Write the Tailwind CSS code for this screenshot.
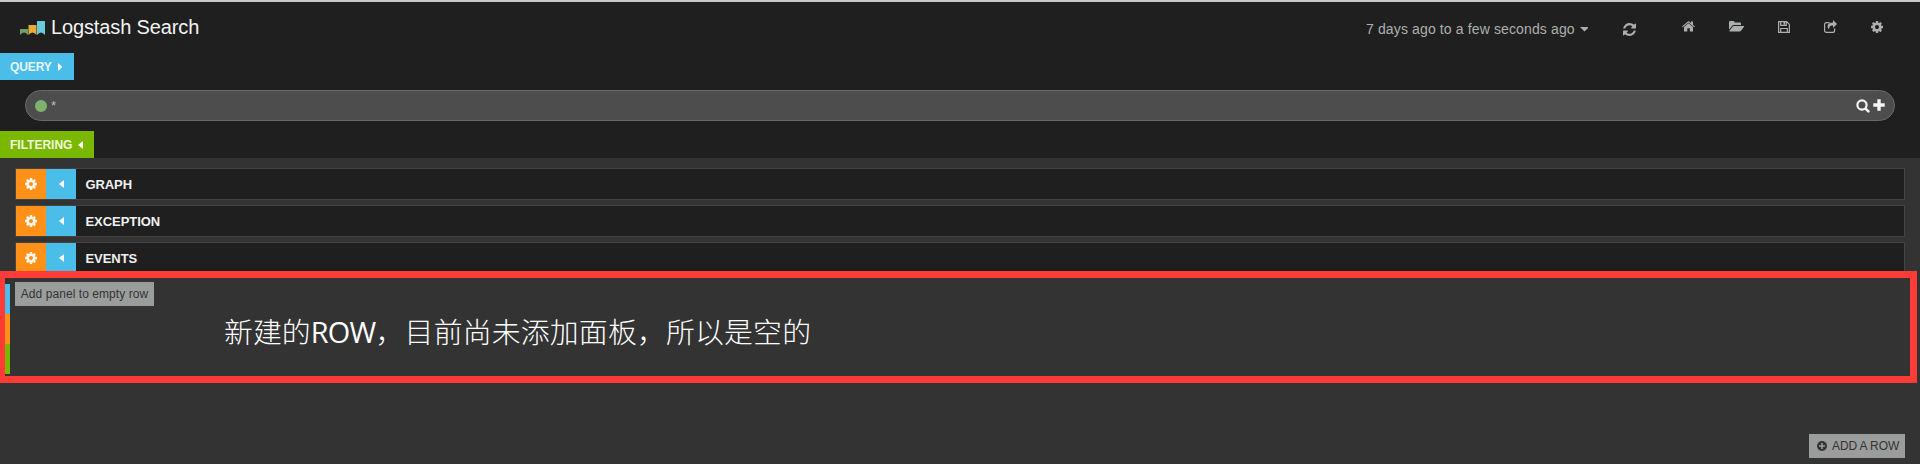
<!DOCTYPE html>
<html lang="zh">
<head>
<meta charset="utf-8">
<title>Logstash Search</title>
<script src="https://cdn.jsdelivr.net/npm/@tailwindcss/browser@4"></script>
</head>
<body class="relative h-[464px] w-[1920px] overflow-hidden bg-[#333333] font-['Liberation_Sans','Noto_Sans_CJK_SC',sans-serif]">
<svg class="hidden">
  <symbol id="cog" viewBox="0 0 1536 1536"><path d="M1024 768q0-106-75-181t-181-75-181 75-75 181 75 181 181 75 181-75 75-181zm512-109v222q0 12-8 23t-20 13l-185 28q-19 54-39 91 35 50 107 138 10 12 10 25t-9 23q-27 37-99 108t-94 71q-12 0-26-9l-138-108q-44 23-91 38-16 136-29 186-7 28-36 28H657q-14 0-24.500-8.500T621 1506l-28-184q-49-16-90-37l-141 107q-10 9-25 9-14 0-25-11-126-114-165-168-7-10-7-23 0-12 8-23 15-21 51-66.500t54-70.500q-27-50-41-99L29 913q-13-2-21-12.500T0 877V655q0-12 8-23t19-13l186-28q14-46 39-92-40-57-107-138-10-12-10-24 0-10 9-23 26-36 98.500-107.500T337 135q13 0 26 10l138 107q44-23 91-38 16-136 29-186 7-28 36-28h222q14 0 24.500 8.500T915 30l28 184q49 16 90 37l142-107q9-9 24-9 13 0 25 10 129 119 165 170 7 8 7 22 0 12-8 23-15 21-51 66.500t-54 70.500q26 50 41 98l183 28q13 2 21 12.500t8 23.500z"/></symbol>
</svg>
<div class="flex h-full flex-col">
  <header class="h-[158px] shrink-0 border-t-2 border-[#c8caca] bg-[#1f1f1f]">
    <div class="flex h-[51px] items-start">
      <div class="flex pt-[12px] pl-5">
        <svg class="mt-[6px] mr-[6px]" width="25" height="16" viewBox="0 0 25 16"><path fill="#6f9e6c" d="M0 9h8v6q-4-5-8 0z"/><path fill="#e9ac35" d="M8.500 5h8v10q-4-5-8 0z"/><path fill="#6ccbdb" d="M17 1h8v14q-4-5-8 0z"/></svg>
        <h1 class="w-[148px] text-[20px] leading-[26px] tracking-[-0.13px] whitespace-nowrap text-[#f4f4f4]">Logstash Search</h1>
      </div>
      <nav class="ml-auto flex pr-[37px] text-[#adafae]">
        <div class="mt-[18px] mr-[35px] flex w-[222px] text-sm leading-[18px] tracking-[0.13px] whitespace-nowrap">7 days ago to a few seconds ago<svg class="mt-[7px] ml-[5px]" width="9" height="5"><path fill="currentColor" d="M0 0h9L4.500 4.500z"/></svg></div>
        <svg class="mt-[21px] mr-[46px]" width="13" height="13" viewBox="0 0 1536 1536" fill="currentColor"><path d="M1511 928q0 5-1 7-64 268-268 434.500T764 1536q-146 0-282.500-55T238 1324l-129 129q-19 19-45 19t-45-19-19-45V960q0-26 19-45t45-19h448q26 0 45 19t19 45-19 45l-137 137q71 66 161 102t187 36q134 0 250-65t186-179q11-17 53-117 8-23 30-23h192q13 0 22.500 9.500t9.500 22.500zm25-800v448q0 26-19 45t-45 19h-448q-26 0-45-19t-19-45 19-45l138-138Q969 256 768 256q-134 0-250 65T332 500q-11 17-53 117-8 23-30 23H50q-13 0-22.500-9.500T18 608v-7q65-268 270-434.500T768 0q146 0 284 55.500T1297 212l130-129q19-19 45-19t45 19 19 45z"/></svg>
        <svg class="mt-[18px] mr-[34px]" width="13" height="13" viewBox="0 0 13 13" fill="currentColor"><path d="M6.500 3.200 11 7v4.500H7.800V8.200H5.300v3.300H2V7z"/><path d="M6.500 1 9 3V1.500h2V4.700L13 6.500l-.7.800L6.500 2.500.7 7.300 0 6.500z"/></svg>
        <svg class="mt-[18px] mr-[33px]" width="16" height="13" viewBox="0 0 16 13" fill="currentColor"><path d="M0 9.800V2Q0 1 1 1h3.500q1 0 1 1v.5H11q1 0 1 1V5H5Q3.800 5 3 6z"/><path d="M5 6h9.700q.8 0 .3.800L12.200 10.500q-.8 1-1.800 1H.8q-.8 0-.3-.8L3.300 7Q4 6 5 6z"/></svg>
        <svg class="mt-[19px] mr-[34px]" width="12" height="12" viewBox="0 0 12 12" fill="none" stroke="currentColor" stroke-width="1.200"><path d="M.6.6h8l2.800 2.800v8H.6zM2.700 11.400V7.500h6.600v3.900M2.700.6v3.800h5.500V.6"/><path fill="currentColor" stroke="none" d="M5.500 1h1.500v2.700H5.500z"/></svg>
        <svg class="mt-[18px] mr-[34px]" width="13" height="13" viewBox="0 0 13 13" fill="none" stroke="currentColor" stroke-width="1.200"><path d="M5.500 2.600H2.600q-2 0-2 2v6q0 1.800 2 1.800h6q2 0 2-2V8.500"/><path fill="currentColor" stroke="none" d="M9 0l4 4-4 4V5.600Q4.800 5.200 5.200 9.600 2.600 7 4 4.500 5.300 2.400 9 2.400z"/></svg>
        <svg class="mt-[19px]" width="12" height="12" fill="currentColor"><use href="#cog"/></svg>
      </nav>
    </div>
    <div class="flex h-[27px] w-[74px] items-center gap-[6px] bg-[#4abde8] pl-[10px] text-xs font-bold tracking-[-0.1px] text-[#e8f8ff]">QUERY<svg width="4" height="8" fill="#fff"><path d="M0 0 4.500 4 0 8z"/></svg></div>
    <div class="mt-[10px] ml-[25px] flex h-[31px] w-[1870px] items-center rounded-full border border-[#696969] bg-[#4d4d4d] pr-[9px] pl-[9px]">
      <span class="size-3 rounded-full bg-[#7eb26d]"></span>
      <span class="ml-1 text-[13px] leading-[18px] text-[#bbbbbb]">*</span>
      <svg class="ml-auto" width="14" height="14" viewBox="0 0 14 14" fill="none" stroke="#f4f4f4"><circle cx="6" cy="6" r="4.600" stroke-width="2.200"/><path stroke-width="2.500" stroke-linecap="round" d="m9.600 9.600 2.800 2.800"/></svg>
      <svg class="-mt-px ml-[3px]" width="12" height="12" fill="#f4f4f4"><path d="M4.300.3h3.400v4h4v3.400h-4v4H4.300v-4h-4V4.300h4z"/></svg>
    </div>
    <div class="mt-[10px] flex h-[27px] w-[94px] items-center gap-[6px] bg-[#7ab800] pl-[10px] text-xs font-bold text-[#f1fadf]">FILTERING<svg width="5" height="8" fill="#fff"><path d="M5 0 0 4l5 4z"/></svg></div>
  </header>
  <main class="mt-[10px] flex flex-col gap-[5px] pr-[15px] pl-[15px]">
    <section class="flex h-8 border border-[#444444] bg-[#1f1f1f]">
      <div class="flex w-[30px] items-center justify-center bg-[#ff9119]"><svg width="12" height="12" fill="#fff5e8"><use href="#cog"/></svg></div>
      <div class="flex w-[30px] items-center justify-center bg-[#4abde8]"><svg width="5" height="8" fill="#fff"><path d="M5 0 0 4l5 4z"/></svg></div>
      <h2 class="pl-[9.500px] text-[13px] leading-[31px] font-bold tracking-[-0.1px] text-[#f1f1f1]">GRAPH</h2>
    </section>
    <section class="flex h-8 border border-[#444444] bg-[#1f1f1f]">
      <div class="flex w-[30px] items-center justify-center bg-[#ff9119]"><svg width="12" height="12" fill="#fff5e8"><use href="#cog"/></svg></div>
      <div class="flex w-[30px] items-center justify-center bg-[#4abde8]"><svg width="5" height="8" fill="#fff"><path d="M5 0 0 4l5 4z"/></svg></div>
      <h2 class="pl-[9.500px] text-[13px] leading-[31px] font-bold tracking-[-0.05px] text-[#f1f1f1]">EXCEPTION</h2>
    </section>
    <section class="flex h-8 border border-[#444444] bg-[#1f1f1f]">
      <div class="flex w-[30px] items-center justify-center bg-[#ff9119]"><svg width="12" height="12" fill="#fff5e8"><use href="#cog"/></svg></div>
      <div class="flex w-[30px] items-center justify-center bg-[#4abde8]"><svg width="5" height="8" fill="#fff"><path d="M5 0 0 4l5 4z"/></svg></div>
      <h2 class="pl-[9.500px] text-[13px] leading-[31px] font-bold tracking-[-0.05px] text-[#f1f1f1]">EVENTS</h2>
    </section>
  </main>
  <section class="relative -mt-[3px] flex h-[112px] w-[1917px] shrink-0 border-[7px] border-l-[5px] border-[#ff3b38] bg-[#333333]">
    <div class="mt-[6px] w-[5px] shrink-0"><div class="h-[30px] bg-[#4abde8]"></div><div class="h-[30px] bg-[#ff9119]"></div><div class="h-[30px] bg-[#7ab800]"></div></div>
    <button class="mt-[4px] ml-[5px] h-6 w-[139px] shrink-0 bg-[#9b9d9c] text-xs leading-[23px] tracking-[0.06px] whitespace-nowrap text-[#333333]">Add panel to empty row</button>
    <p class="mt-[32px] ml-[70px] text-[28.900px] leading-[44px] whitespace-nowrap text-white font-['Open_Sans','Noto_Sans_CJK_SC',sans-serif]"><span class="font-light">新建的</span><span class="font-medium tracking-[-0.7px]">ROW</span><span class="font-light tracking-[0.15px]">，目前尚未添加面板，所以是空的</span></p>
  </section>
  <footer class="mt-[51px] flex justify-end pr-[15px]">
    <button class="flex h-6 w-24 items-center bg-[#9b9d9c] pl-[8px] text-xs tracking-[-0.1px] whitespace-nowrap text-[#333333]"><svg class="mr-[5px]" width="10" height="10" viewBox="0 0 10 10"><circle cx="5" cy="5" r="5" fill="#333"/><path stroke="#9b9d9c" stroke-width="1.600" d="M5 2v6M2 5h6"/></svg>ADD A ROW</button>
  </footer>
</div>
</body>
</html>
